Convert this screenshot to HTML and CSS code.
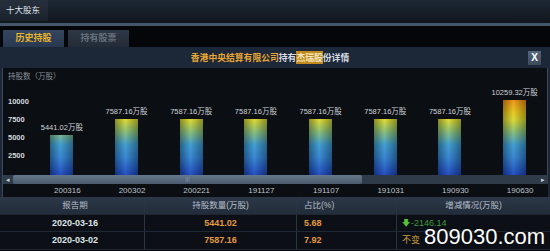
FILE: index.html
```html
<!DOCTYPE html>
<html lang="zh-CN">
<head>
  <meta charset="UTF-8">
  <title>十大股东</title>
  <link rel="stylesheet" href="styles.css">
</head>
<body>
  <div class="topbar">
    <div class="toptab">十大股东</div>
  </div>
  <div class="topline"></div>

  <div class="tabs">
    <div class="tab active">历史持股</div>
    <div class="tab">持有股票</div>
  </div>

  <div class="panel">
    <div class="panel-head">
      <div class="panel-title">
        <span class="gold">香港中央结算有限公司</span><span class="light">持有</span><span class="mark">杰瑞股</span><span class="light">份详情</span>
      </div>
      <div class="close-btn">X</div>
    </div>

    <div class="chart">
      <div class="chart-unit">持股数（万股）</div>
      <div class="plot">
        <div class="y-axis">
          <div class="tick">10000</div>
          <div class="tick">7500</div>
          <div class="tick">5000</div>
          <div class="tick">2500</div>
        </div>
        <div class="bars">
          <div class="col"><div class="bar-label">5441.02万股</div><div class="bar" style="height: 40px"></div></div>
          <div class="col"><div class="bar-label">7587.16万股</div><div class="bar" style="height: 56px"></div></div>
          <div class="col"><div class="bar-label">7587.16万股</div><div class="bar" style="height: 56px"></div></div>
          <div class="col"><div class="bar-label">7587.16万股</div><div class="bar" style="height: 56px"></div></div>
          <div class="col"><div class="bar-label">7587.16万股</div><div class="bar" style="height: 56px"></div></div>
          <div class="col"><div class="bar-label">7587.16万股</div><div class="bar" style="height: 56px"></div></div>
          <div class="col"><div class="bar-label">7587.16万股</div><div class="bar" style="height: 56px"></div></div>
          <div class="col"><div class="bar-label">10259.32万股</div><div class="bar" style="height: 75px"></div></div>
        </div>
      </div>
    </div>

    <div class="scrollbar">
      <div class="arrow">◂</div>
      <div class="thumb"><span class="grip">|||</span></div>
      <div class="track"></div>
      <div class="arrow">▸</div>
    </div>

    <div class="x-axis">
      <div>200316</div>
      <div>200302</div>
      <div>200221</div>
      <div>191127</div>
      <div>191107</div>
      <div>191031</div>
      <div>190930</div>
      <div>190630</div>
    </div>

    <div class="table">
      <div class="row head">
        <div class="cell c1">报告期</div>
        <div class="cell c2">持股数量(万股)</div>
        <div class="cell c3">占比(%)</div>
        <div class="cell c4">增减情况(万股)</div>
      </div>
      <div class="row">
        <div class="cell c1">2020-03-16</div>
        <div class="cell c2 num">5441.02</div>
        <div class="cell c3 num">5.68</div>
        <div class="cell c4 down"><span class="down-arrow">🡇</span>-2146.14</div>
      </div>
      <div class="row">
        <div class="cell c1">2020-03-02</div>
        <div class="cell c2 num">7587.16</div>
        <div class="cell c3 num">7.92</div>
        <div class="cell c4 same">不变</div>
      </div>
    </div>
  </div>

  <div class="watermark">809030.com</div>
</body>
</html>
```

FILE: styles.css
```css
* {
  margin: 0;
  padding: 0;
  box-sizing: border-box;
}

body {
  width: 550px;
  height: 251px;
  overflow: hidden;
  position: relative;
  background: #05070a;
  font-family: "Liberation Sans", "Noto Sans CJK SC", sans-serif;
  color: #d4d8dc;
}

/* top strip */
.topbar {
  height: 23px;
  background: linear-gradient(#1d2733, #10161d);
}

.toptab {
  width: 48px;
  height: 21px;
  padding: 3px 0 0 6px;
  font-size: 8.5px;
  color: #dfe3e8;
  background: linear-gradient(#26303c, #1a222c);
}

.topline {
  height: 3px;
  background: #46566a;
}

.tabs {
  display: flex;
  gap: 4px;
  height: 21px;
  padding: 4px 0 0 3px;
  background: #04060a;
}

.tab {
  width: 61px;
  height: 17px;
  line-height: 17px;
  text-align: center;
  font-size: 9px;
  font-weight: 700;
  color: #66707c;
  background: linear-gradient(#2e3846, #232b37);
}

.tab.active {
  color: #e9b52c;
  background: linear-gradient(#34465e, #283850);
}

/* panel */
.panel {
  background: #1c2837;
  padding: 0 2px;
}

.panel-head {
  display: flex;
  align-items: center;
  height: 21px;
  padding: 0 7px 0 18px;
}

.panel-title {
  flex: 1;
  text-align: center;
  font-size: 8.8px;
  font-weight: 700;
  font-family: "Noto Sans CJK SC", sans-serif;
  margin-left: -8px;
}

.gold { color: #eaa736; }
.light { color: #d7dce4; }
.mark {
  color: #f4e6c0;
  background: #c08a1e;
}

.close-btn {
  width: 13px;
  height: 14px;
  line-height: 14px;
  text-align: center;
  font-size: 10px;
  font-weight: 700;
  color: #ffffff;
  background: linear-gradient(#56677b, #3b4a5c);
}

/* chart */
.chart {
  height: 107px;
  background: #0b0e13;
  border-left: 1px solid #3c4a5a;
  border-right: 1px solid #3c4a5a;
  padding-top: 3px;
}

.chart-unit {
  height: 12px;
  line-height: 12px;
  padding-left: 5px;
  font-size: 7.5px;
  color: #8a929c;
}

.plot {
  display: flex;
  height: 92px;
}

.y-axis {
  width: 31px;
  padding-top: 9.5px;
}

.tick {
  height: 18.33px;
  line-height: 18.33px;
  padding-left: 5px;
  font-size: 7.5px;
  font-weight: 700;
  color: #d6dadf;
}

.bars {
  display: grid;
  grid-template-columns: repeat(8, 64.7px);
}

.col {
  display: flex;
  flex-direction: column;
  justify-content: flex-end;
  align-items: center;
}

.bar-label {
  font-size: 7.5px;
  color: #cfd3d8;
  margin-bottom: 3px;
  white-space: nowrap;
}

.bar {
  width: 23px;
  background:
    linear-gradient(90deg, rgba(0, 0, 0, 0.35), rgba(255, 255, 255, 0.05) 45%, rgba(0, 0, 0, 0.35)),
    linear-gradient(#f08a10 0%, #e8c818 18%, #d8d830 28%, #8cc070 42%, #3a9ad0 60%, #2f7fd0 78%, #1a46c0 100%);
  background-size: 100% 100%, 100% 76px;
  background-position: bottom;
  background-repeat: no-repeat;
}

/* scrollbar */
.scrollbar {
  display: flex;
  height: 9px;
  overflow: hidden;
  background: #2f3b49;
  border-left: 1px solid #3c4a5a;
}

.arrow {
  width: 10px;
  font-size: 7px;
  line-height: 9px;
  text-align: center;
  color: #c8d0d8;
}

.thumb {
  width: 349px;
  height: 9px;
  font-size: 6px;
  line-height: 9px;
  text-align: center;
  background: linear-gradient(#66788c, #4a5a6c);
  border-radius: 2px;
}

.grip {
  color: #8898a8;
}

.track {
  flex: 1;
}

/* x axis */
.x-axis {
  display: grid;
  grid-template-columns: repeat(8, 64.7px);
  height: 13px;
  padding-left: 32px;
  background: #0b0e13;
  border-left: 1px solid #3c4a5a;
}

.x-axis div {
  text-align: center;
  font-size: 8px;
  line-height: 13px;
  color: #bfc4ca;
}

/* table */
.table {
  margin: 0 -2px;
  background: #0c1016;
}

.row {
  display: flex;
  height: 17.5px;
  border-bottom: 1px solid #1e2834;
}

.row.head {
  background: linear-gradient(#2c3848, #222c3a);
  color: #b7bec8;
  font-size: 8.5px;
}

.cell {
  line-height: 17px;
  border-right: 1px solid #2a3544;
}

.c1 { width: 145px; text-align: center; padding-left: 6px; }
.c2 { width: 152px; text-align: center; }
.c3 { width: 100px; padding-left: 7px; }
.c4 { flex: 1; padding-left: 5px; border-right: none; }

.row.head .c4 { text-align: center; padding-left: 0; }

.row:not(.head) .cell {
  font-size: 9px;
  font-weight: 700;
  color: #dfe3e8;
}

.row:not(.head) .num { color: #e39a42; }
.row:not(.head) .down { color: #3e9a3a; font-weight: 400; }
.row:not(.head) .same { color: #c99a3c; font-weight: 400; }

.down-arrow {
  color: #58c238;
  font-size: 8px;
  margin-right: 1px;
}

/* overlay mark */
.watermark {
  position: absolute;
  left: 424px;
  top: 226px;
  font-size: 22px;
  line-height: 22px;
  color: #ffffff;
  text-shadow: 0 0 2px rgba(0, 0, 0, 0.8);
}
```
